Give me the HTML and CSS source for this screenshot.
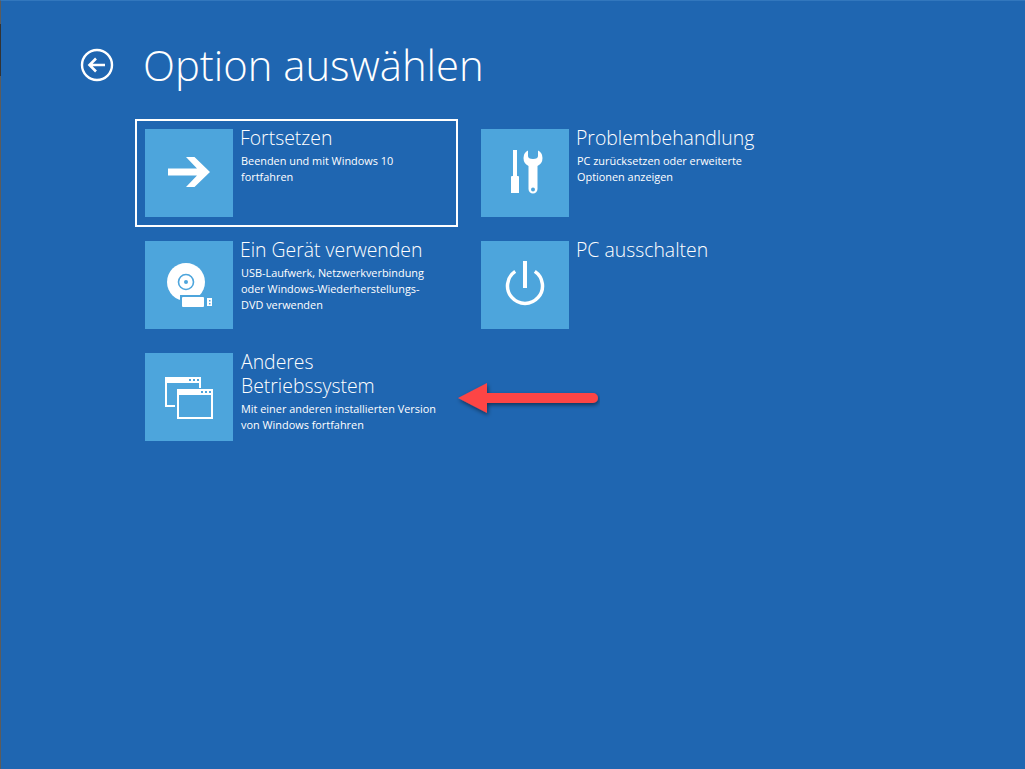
FILE: index.html
```html
<!DOCTYPE html>
<html lang="de">
<head>
    <meta charset="UTF-8">
    <title>Option auswählen</title>
    <link rel="stylesheet" href="styles.css">
</head>
<body>
    <div class="screen">
        <div class="edge-mark"></div>

        <!-- Header -->
        <div class="header">
            <svg class="back-icon" width="34" height="34" viewBox="0 0 34 34">
                <circle cx="17" cy="17" r="15" fill="none" stroke="#fff" stroke-width="2.4"/>
                <path d="M25 17H10M16 10.5L9.5 17L16 23.5" fill="none" stroke="#fff" stroke-width="2.6"/>
            </svg>
            <h1>Option auswählen</h1>
        </div>

        <!-- Options -->
        <div class="options">
            <div class="option selected">
                <div class="tile">
                    <svg width="88" height="88" viewBox="0 0 88 88">
                        <path d="M23 39.5H52L41 28H49.5L65 43L49.5 58H41L52 46.5H23Z" fill="#fff"/>
                    </svg>
                </div>
                <div class="option-text">
                    <div class="option-title">Fortsetzen</div>
                    <div class="option-desc">Beenden und mit Windows 10 fortfahren</div>
                </div>
            </div>

            <div class="option">
                <div class="tile">
                    <svg width="88" height="88" viewBox="0 0 88 88">
                        <rect x="32" y="21" width="4" height="27" fill="#fff"/>
                        <path d="M30 48Q30 47 31 47H37Q38 47 38 48V64H30Z" fill="#fff"/>
                        <path d="M47 21.5Q42.5 23.5 42.5 29Q42.5 34.5 47.5 37V60A4.5 4.5 0 0 0 56.5 60V37Q61.5 34.5 61.5 29Q61.5 23.5 57 21.5V27Q57 30 52 30Q47 30 47 27Z" fill="#fff"/>
                        <circle cx="52" cy="60.5" r="2" fill="#4da5dc"/>
                    </svg>
                </div>
                <div class="option-text">
                    <div class="option-title">Problembehandlung</div>
                    <div class="option-desc">PC zurücksetzen oder erweiterte Optionen anzeigen</div>
                </div>
            </div>

            <div class="option">
                <div class="tile">
                    <svg width="88" height="88" viewBox="0 0 88 88">
                        <circle cx="41" cy="41" r="19" fill="#fff"/>
                        <circle cx="41" cy="41" r="7.5" fill="none" stroke="#4da5dc" stroke-width="1.6"/>
                        <circle cx="41" cy="41" r="2" fill="#4da5dc"/>
                        <rect x="35" y="54" width="34" height="14" fill="#4da5dc"/>
                        <rect x="37" y="56" width="22" height="10" rx="1" fill="#fff"/>
                        <path d="M62 57H67V65H62ZM64 59V60.5H65.5V59ZM64 62V63.5H65.5V62Z" fill="#fff" fill-rule="evenodd"/>
                    </svg>
                </div>
                <div class="option-text">
                    <div class="option-title">Ein Gerät verwenden</div>
                    <div class="option-desc">USB-Laufwerk, Netzwerkverbindung oder Windows-Wiederherstellungs-DVD verwenden</div>
                </div>
            </div>

            <div class="option">
                <div class="tile">
                    <svg width="88" height="88" viewBox="0 0 88 88">
                        <path d="M34.2 30.4A17.5 17.5 0 1 0 53.8 30.4" fill="none" stroke="#fff" stroke-width="3.5"/>
                        <rect x="42" y="20" width="4" height="27" fill="#fff"/>
                    </svg>
                </div>
                <div class="option-text">
                    <div class="option-title">PC ausschalten</div>
                </div>
            </div>

            <div class="option">
                <div class="tile">
                    <svg width="88" height="88" viewBox="0 0 88 88">
                        <path d="M30 53H21V25H55V35" fill="none" stroke="#fff" stroke-width="2"/>
                        <rect x="20" y="24" width="36" height="6" fill="#fff"/>
                        <rect x="33" y="37" width="34" height="28" fill="none" stroke="#fff" stroke-width="2"/>
                        <rect x="32" y="36" width="36" height="6" fill="#fff"/>
                        <path d="M44 26h2v2h-2zM48 26h2v2h-2zM52 26h2v2h-2zM56 38h2v2h-2zM60 38h2v2h-2zM64 38h2v2h-2z" fill="#4da5dc"/>
                    </svg>
                </div>
                <div class="option-text option-text-wide">
                    <div class="option-title">Anderes Betriebssystem</div>
                    <div class="option-desc">Mit einer anderen installierten Version von Windows fortfahren</div>
                </div>
            </div>
        </div>

        <!-- Red annotation arrow -->
        <svg class="red-arrow" width="150" height="44" viewBox="0 0 150 44">
            <defs>
                <filter id="arrowShadow" x="-10%" y="-30%" width="120%" height="170%">
                    <feDropShadow dx="1" dy="2" stdDeviation="2" flood-color="#000" flood-opacity="0.5"/>
                </filter>
            </defs>
            <path d="M8 22L37 7V17H143A5 5 0 0 1 143 27H37V37Z" fill="#fd4444" filter="url(#arrowShadow)"/>
        </svg>
    </div>
</body>
</html>
```

FILE: styles.css
```css
html, body {
    margin: 0;
    padding: 0;
}

body {
    width: 1025px;
    height: 769px;
    overflow: hidden;
    font-family: "Open Sans", sans-serif;
    color: #fff;
}

.screen {
    position: relative;
    box-sizing: border-box;
    width: 1025px;
    height: 769px;
    padding-left: 1px;
    background-color: #1f66b1;
    border-top: 1px solid #3277bd;
    border-left: 1px solid #5c5c5c;
}

/* Dark bit of the window behind, showing at the left edge */
.edge-mark {
    position: absolute;
    left: -1px;
    top: 23px;
    width: 1px;
    height: 52px;
    background-color: #333;
}

/* Header */
.header {
    display: flex;
    align-items: center;
    height: 100px;
    padding-left: 78px;
    padding-top: 28px;
    box-sizing: border-box;
}

.back-icon {
    margin-right: 29px;
}

h1 {
    margin: 0;
    font-size: 41.8px;
    font-weight: 300;
    line-height: 72px;
}

/* Options grid */
.options {
    display: grid;
    grid-template-columns: 323px 323px;
    grid-auto-rows: 108px;
    column-gap: 13px;
    row-gap: 4px;
    margin: 18px 0 0 133px;
}

.option {
    display: flex;
    box-sizing: border-box;
    padding: 8px;
    border: 2px solid transparent;
}

.option.selected {
    border-color: #fff;
}

.tile {
    flex: none;
    width: 88px;
    height: 88px;
    background-color: #4da5dc;
}

.tile svg {
    display: block;
}

.option-text {
    width: 198px;
    margin-left: 7px;
}

.option-text-wide {
    margin-left: 8px;
}

.option-text-wide .option-desc {
    padding-left: 0;
}

.option-title {
    font-size: 19.4px;
    font-weight: 300;
    line-height: 24px;
    margin-top: -3px;
}

.option-desc {
    font-size: 10.9px;
    line-height: 16px;
    margin-top: 3px;
    padding-left: 1px;
}

.red-arrow {
    position: absolute;
    left: 449px;
    top: 375px;
}
```
